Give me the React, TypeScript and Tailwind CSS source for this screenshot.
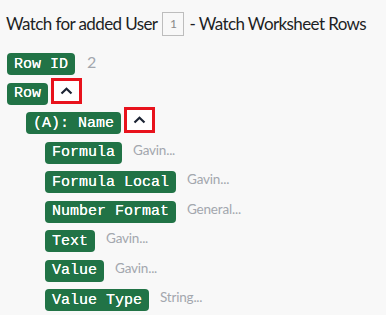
import React from "react";

const Badge = ({ label }: { label: string }) => (
  <span className="inline-flex h-[22px] shrink-0 items-center whitespace-pre rounded-[4px] bg-[#217346] px-[7px] font-['Liberation_Mono',monospace] text-[15px] font-normal leading-none text-white [text-shadow:0_0_0.4px_#ffffff]">
    {label}
  </span>
);

const Chevron = () => (
  <span className="-mt-[5px] ml-[3px] flex h-[26px] w-[31px] shrink-0 items-center justify-center border-[3px] border-[#e8121c] bg-white">
    <svg width="13" height="8" viewBox="0 0 13 8" fill="none">
      <path d="M1.5 6.5 L6.5 1.8 L11.5 6.5" stroke="#1b2333" strokeWidth="2.2" />
    </svg>
  </span>
);

const Row = ({
  label,
  value,
  indent,
  chevron,
  big,
}: {
  label: string;
  value?: string;
  indent: string;
  chevron?: boolean;
  big?: boolean;
}) => (
  <div className={`flex items-start ${indent}`}>
    <Badge label={label} />
    {chevron && <Chevron />}
    {value && (
      <span
        className={
          big
            ? "ml-[12px] font-['Lato',sans-serif] text-[16px] leading-[18px] text-[#a3a7ae]"
            : "ml-[11px] -mt-[1px] font-['Lato',sans-serif] text-[13.5px] leading-[18px] tracking-[-0.2px] text-[#a3a7ae]"
        }
      >
        {value}
      </span>
    )}
  </div>
);

export default function App() {
  return (
    <div className="h-[315px] w-[386px] overflow-hidden bg-[#f8f8f8] font-['Lato',sans-serif]">
      <div className="flex items-center whitespace-nowrap pl-[6px] pt-[12px] text-[17px] leading-[24px] tracking-[-0.6px] text-[#1d1f24]">
        <span>Watch for added User</span>
        <span className="ml-[5px] flex h-[24px] w-[22px] items-center justify-center border border-[#bdbdbd] bg-[#f8f8f8] text-[12px] tracking-normal text-[#8a8a8a]">
          1
        </span>
        <span className="ml-[5px]">- Watch Worksheet Rows</span>
      </div>
      <div className="mt-[17px] flex flex-col gap-[7.5px] pl-[7px]">
        <Row label="Row ID" value="2" indent="" big />
        <Row label="Row" indent="" chevron />
        <Row label="(A): Name" indent="pl-[19px]" chevron />
        <Row label="Formula" value="Gavin..." indent="pl-[38px]" />
        <Row label="Formula Local" value="Gavin..." indent="pl-[38px]" />
        <Row label="Number Format" value="General..." indent="pl-[38px]" />
        <Row label="Text" value="Gavin..." indent="pl-[38px]" />
        <Row label="Value" value="Gavin..." indent="pl-[38px]" />
        <Row label="Value Type" value="String..." indent="pl-[38px]" />
      </div>
    </div>
  );
}
